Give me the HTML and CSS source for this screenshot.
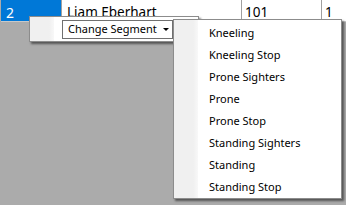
FILE: index.html
```html
<!DOCTYPE html>
<html lang="en">
<head>
  <meta charset="UTF-8" />
  <title>Segment Menu</title>
  <link rel="stylesheet" href="styles.css">
</head>
<body>
  <div class="grid">
    <div class="row">
      <div class="cell col-id selected">2</div>
      <div class="cell col-name">Liam Eberhart</div>
      <div class="cell col-bib">101</div>
      <div class="cell col-lane">1</div>
    </div>
  </div>

  <!-- context menu -->
  <div class="menu context">
    <div class="strip"></div>
    <div class="drop-button">Change Segment <span class="caret"></span></div>
  </div>

  <!-- segment submenu -->
  <div class="menu submenu">
    <div class="strip"></div>
    <ul class="items">
      <li>Kneeling</li>
      <li>Kneeling Stop</li>
      <li>Prone Sighters</li>
      <li>Prone</li>
      <li>Prone Stop</li>
      <li>Standing Sighters</li>
      <li>Standing</li>
      <li>Standing Stop</li>
    </ul>
  </div>
</body>
</html>
```

FILE: styles.css
```css
body {
  margin: 0;
  background: #ababab;
  font-family: "Noto Sans", "Open Sans", sans-serif;
  font-size: 11px;
  color: #000;
  width: 346px;
  height: 205px;
  overflow: hidden;
  position: relative;
}
.grid {
  padding-left: 1px;
}
.row {
  display: flex;
  height: 21px;
  border-bottom: 1px solid #c8c8c8;
  font-size: 13.5px;
}
.cell {
  box-sizing: border-box;
  height: 21px;
  padding: 4px 4px 0;
  line-height: 17px;
  background: #fff;
  border-right: 1px solid #a0a0a0;
  white-space: nowrap;
}
.col-id { width: 61px; padding-left: 5px; font-size: 14px; }
.col-name { width: 180px; padding-left: 5px; }
.col-bib { width: 80px; padding-left: 3px; }
.col-lane { flex: 1; padding-left: 3px; border-right: none; }
.selected {
  background: #0078d7;
  color: #fff;
}

.menu {
  position: absolute;
  box-sizing: border-box;
  background: #fff;
  border: 1px solid #8c8c8c;
  box-shadow: 2px 2px 2px rgba(0, 0, 0, 0.5);
  display: flex;
}
.strip {
  width: 24px;
  flex: none;
  background: linear-gradient(to right, #f0f0f0 80%, #f8f8f8);
}

.context {
  left: 29px;
  top: 16px;
  width: 170px;
  height: 26px;
}
.drop-button {
  box-sizing: border-box;
  margin: 3px 0 0 8px;
  width: 111px;
  height: 19px;
  border: 1px solid #707070;
  padding-left: 5px;
  line-height: 16px;
  white-space: nowrap;
}
.caret {
  display: inline-block;
  margin-left: 3px;
  vertical-align: 2px;
  border-left: 3px solid transparent;
  border-right: 3px solid transparent;
  border-top: 3px solid #000;
}

.submenu {
  left: 173px;
  top: 19px;
  width: 169px;
  height: 180px;
}
.items {
  list-style: none;
  margin: 0;
  padding: 2px 0 0 11px;
}
.items li {
  height: 22px;
  line-height: 22px;
  white-space: nowrap;
}
```
